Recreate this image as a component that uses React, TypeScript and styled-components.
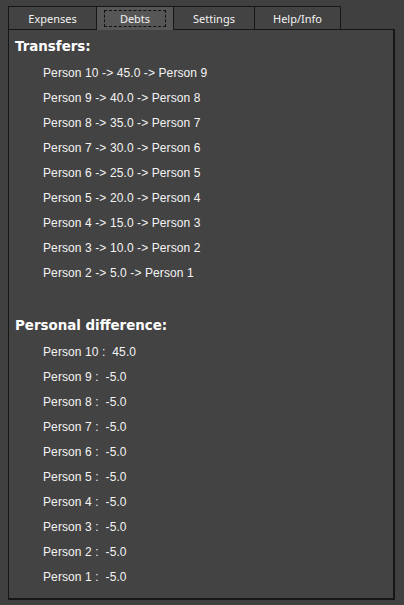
import React from "react";
import styled, { createGlobalStyle } from "styled-components";

const Global = createGlobalStyle`
  html, body { margin: 0; padding: 0; background: #404040; }
  * { box-sizing: border-box; }
`;

const Window = styled.div`
  width: 404px;
  height: 605px;
  background: #404040;
  padding: 6px 9px 5px 8px;
  display: flex;
  flex-direction: column;
  font-family: "Liberation Sans", Arial, sans-serif;
  color: #ffffff;
`;

const TabBar = styled.div`
  display: flex;
  height: 23px;
`;

const Tab = styled.div<{ $w: number; $active?: boolean }>`
  position: relative;
  width: ${(p) => p.$w}px;
  height: ${(p) => (p.$active ? 24 : 23)}px;
  margin-left: -1px;
  &:first-child { margin-left: 0; }
  border: 1px solid #161616;
  border-bottom: none;
  background: ${(p) => (p.$active ? "#565656" : "#434343")};
  z-index: ${(p) => (p.$active ? 2 : 1)};
  display: flex;
  align-items: flex-start;
  justify-content: center;
  font-family: "Noto Sans", "DejaVu Sans", sans-serif;
  font-size: 11px;
  color: #f2f2f2;
  padding-top: 3px;
`;

const Focus = styled.span`
  display: flex;
  align-items: center;
  justify-content: center;
  width: 62px;
  height: 17px;
  border: 1px dashed #111;
`;

const TabLabel = styled.span`
  line-height: 17px;
`;

const Panel = styled.div`
  flex: 1;
  background: #434343;
  border: 1px solid #161616;
  border-right-width: 2px;
  border-bottom-width: 2px;
  padding: 7px 0 0 6px;
  display: flex;
  flex-direction: column;
`;

const Title = styled.div<{ $gap?: number }>`
  font-family: "DejaVu Sans", sans-serif;
  font-weight: bold;
  font-size: 13.4px;
  line-height: 20px;
  height: 20px;
  margin-top: ${(p) => p.$gap ?? 0}px;
`;

const List = styled.div`
  display: flex;
  flex-direction: column;
  padding-top: 4px;
  padding-left: 28px;
`;

const Row = styled.div`
  height: 25px;
  line-height: 25px;
  font-size: 12px;
  letter-spacing: 0.1px;
  white-space: pre;
  color: #f4f4f4;
`;

const transfers = [
  "Person 10 -> 45.0 -> Person 9",
  "Person 9 -> 40.0 -> Person 8",
  "Person 8 -> 35.0 -> Person 7",
  "Person 7 -> 30.0 -> Person 6",
  "Person 6 -> 25.0 -> Person 5",
  "Person 5 -> 20.0 -> Person 4",
  "Person 4 -> 15.0 -> Person 3",
  "Person 3 -> 10.0 -> Person 2",
  "Person 2 -> 5.0 -> Person 1",
];

const diffs: [string, string][] = [
  ["Person 10", "45.0"],
  ["Person 9", "-5.0"],
  ["Person 8", "-5.0"],
  ["Person 7", "-5.0"],
  ["Person 6", "-5.0"],
  ["Person 5", "-5.0"],
  ["Person 4", "-5.0"],
  ["Person 3", "-5.0"],
  ["Person 2", "-5.0"],
  ["Person 1", "-5.0"],
];

export default function App() {
  return (
    <>
      <Global />
      <Window>
        <TabBar>
          <Tab $w={89}><TabLabel>Expenses</TabLabel></Tab>
          <Tab $w={78} $active>
            <Focus><TabLabel>Debts</TabLabel></Focus>
          </Tab>
          <Tab $w={82}><TabLabel>Settings</TabLabel></Tab>
          <Tab $w={87}><TabLabel>Help/Info</TabLabel></Tab>
        </TabBar>
        <Panel>
          <Title>Transfers:</Title>
          <List>
            {transfers.map((t) => (
              <Row key={t}>{t}</Row>
            ))}
          </List>
          <Title $gap={30}>Personal difference:</Title>
          <List>
            {diffs.map(([n, v]) => (
              <Row key={n}>{`${n} :  ${v}`}</Row>
            ))}
          </List>
        </Panel>
      </Window>
    </>
  );
}
